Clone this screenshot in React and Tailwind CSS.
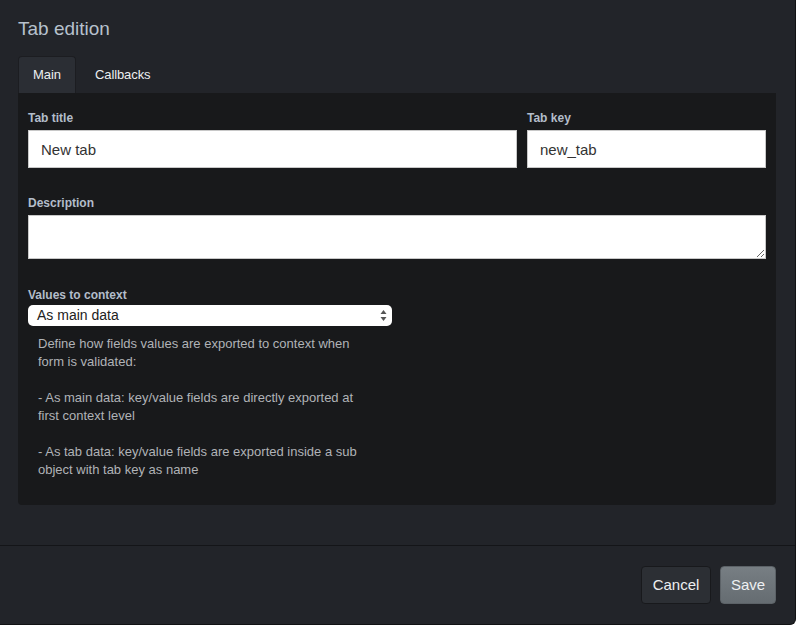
import React from "react";

const font = { fontFamily: "Helvetica, 'Liberation Sans', Arial, sans-serif" };

/**
 * Small bold label above each field
 */
const FieldLabel = ({ children }) => (
  <label className="block text-[12px] font-bold text-[#b3bdca] mb-[4px] leading-[16px]">
    {children}
  </label>
);

export default function App() {
  return (
    <div
      className="w-[796px] h-[625px] bg-[#222429] flex flex-col overflow-hidden rounded-br-[6px] border-b border-r border-[#111214]"
      style={font}
    >
      {/* Header */}
      <div className="px-[18px] pt-[16px] pb-[14px]">
        <h1 className="text-[19px] leading-[26px] text-[#b7c1cd]">Tab edition</h1>
      </div>

      {/* Body */}
      <div className="pl-[18px] pr-[19px] flex-1">
        {/* Tabs */}
        <div className="flex items-end h-[37px]">
          <div className="h-[37px] w-[58px] bg-[#2b2e34] border border-b-0 border-[#1c1d21] rounded-t-[4px] flex items-center justify-center text-[13px] text-[#eceef0]">
            Main
          </div>
          <div className="h-[37px] pl-[19px] pr-[19px] flex items-center text-[13px] tracking-[-0.1px] text-[#eceef0]">
            Callbacks
          </div>
        </div>

        {/* Panel */}
        <div className="bg-[#18191b] rounded-b-[4px] px-[10px] pt-[17px] pb-[26px]">
          <div className="flex gap-[10px]">
            <div className="flex-1">
              <FieldLabel>Tab title</FieldLabel>
              <input
                readOnly
                value="New tab"
                className="w-full h-[38px] bg-white border border-[#c8c8c8] px-[12px] text-[15px] text-[#333]"
                style={font}
              />
            </div>
            <div className="w-[239px]">
              <FieldLabel>Tab key</FieldLabel>
              <input
                readOnly
                value="new_tab"
                className="w-full h-[38px] bg-white border border-[#c8c8c8] px-[12px] text-[15px] text-[#333]"
                style={font}
              />
            </div>
          </div>

          <div className="mt-[27px]">
            <FieldLabel>Description</FieldLabel>
            <textarea
              readOnly
              className="block w-full h-[44px] bg-white border border-[#c8c8c8] resize-y"
            />
          </div>

          <div className="mt-[28px]">
            <FieldLabel>Values to context</FieldLabel>
            <div className="relative w-[364px] h-[21px] bg-white rounded-[5px] flex items-center pl-[9px] -mt-[2px]">
              <span className="text-[14px] text-[#222]">As main data</span>
              <svg
                className="absolute right-[5px] top-[4px]"
                width="7"
                height="13"
                viewBox="0 0 7 13"
              >
                <path d="M3.5 1 L6.5 5 H0.5 Z" fill="#555" />
                <path d="M3.5 12 L6.5 8 H0.5 Z" fill="#555" />
              </svg>
            </div>
            <div className="pl-[10px] pt-[9px] w-[340px] text-[13px] leading-[18px] text-[#b0b3b7]">
              <p>Define how fields values are exported to context when form is validated:</p>
              <p className="mt-[18px]">
                - As main data: key/value fields are directly exported at first context level
              </p>
              <p className="mt-[18px]">
                - As tab data: key/value fields are exported inside a sub object with tab key as name
              </p>
            </div>
          </div>
        </div>
      </div>

      {/* Footer */}
      <div className="border-t border-[#141518] h-[79px] flex items-center justify-end gap-[9px] pl-[20px] pr-[19px]">
        <button className="h-[38px] w-[70px] rounded-[4px] bg-[#2c2f34] border border-[#18191c] text-[15px] text-[#eceef0]">
          Cancel
        </button>
        <button className="h-[38px] w-[56px] rounded-[4px] bg-gradient-to-b from-[#777e83] to-[#656c71] border border-[#5c6267] text-[15px] text-[#eef0f2]">
          Save
        </button>
      </div>
    </div>
  );
}
